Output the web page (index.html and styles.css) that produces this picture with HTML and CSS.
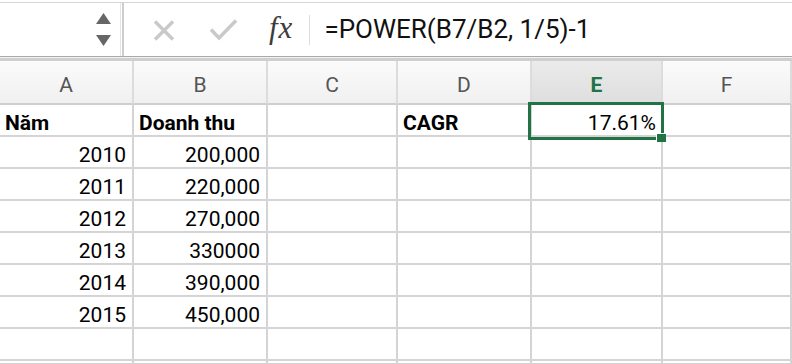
FILE: index.html
```html
<!DOCTYPE html>
<html lang="vi">

<head>
    <meta charset="UTF-8">
    <meta name="viewport" content="width=device-width, initial-scale=1.0">
    <title>CAGR</title>
    <link rel="stylesheet" href="styles.css">
</head>

<body>
    <div class="formula-bar">
        <div class="name-box">
            <div class="spinner">
                <svg width="15" height="12" viewBox="0 0 15 12"><polygon points="7.5,0 15,11 0,11" fill="#666"/></svg>
                <svg width="15" height="12" viewBox="0 0 15 12"><polygon points="0,0 15,0 7.5,11" fill="#666"/></svg>
            </div>
        </div>
        <div class="divider"></div>
        <div class="tools">
            <svg class="cancel" width="22" height="21" viewBox="0 0 22 21">
                <path d="M2 1.5 L20 19.5 M20 1.5 L2 19.5" stroke="#c9c9c9" stroke-width="3.4" fill="none"/>
            </svg>
            <svg class="enter" width="28" height="22" viewBox="0 0 28 22">
                <path d="M2 10.5 L10 19 L27 1.5" stroke="#c9c9c9" stroke-width="3.4" fill="none"/>
            </svg>
            <div class="fx">fx</div>
            <div class="fx-sep"></div>
        </div>
        <div class="formula">=POWER(B7/B2, 1/5)-1</div>
    </div>
    <div class="bar-edge"></div>

    <div class="sheet">
        <div class="head">A</div>
        <div class="head">B</div>
        <div class="head">C</div>
        <div class="head">D</div>
        <div class="head active">E</div>
        <div class="head">F</div>

        <div class="cell bold">Năm</div>
        <div class="cell bold">Doanh thu</div>
        <div class="cell"></div>
        <div class="cell bold">CAGR</div>
        <div class="cell num selected">17.61%
            <div class="selection"><span class="handle"></span></div>
        </div>
        <div class="cell"></div>

        <div class="cell num">2010</div>
        <div class="cell num">200,000</div>
        <div class="cell"></div>
        <div class="cell"></div>
        <div class="cell"></div>
        <div class="cell"></div>

        <div class="cell num">2011</div>
        <div class="cell num">220,000</div>
        <div class="cell"></div>
        <div class="cell"></div>
        <div class="cell"></div>
        <div class="cell"></div>

        <div class="cell num">2012</div>
        <div class="cell num">270,000</div>
        <div class="cell"></div>
        <div class="cell"></div>
        <div class="cell"></div>
        <div class="cell"></div>

        <div class="cell num">2013</div>
        <div class="cell num">330000</div>
        <div class="cell"></div>
        <div class="cell"></div>
        <div class="cell"></div>
        <div class="cell"></div>

        <div class="cell num">2014</div>
        <div class="cell num">390,000</div>
        <div class="cell"></div>
        <div class="cell"></div>
        <div class="cell"></div>
        <div class="cell"></div>

        <div class="cell num">2015</div>
        <div class="cell num">450,000</div>
        <div class="cell"></div>
        <div class="cell"></div>
        <div class="cell"></div>
        <div class="cell"></div>

        <div class="cell"></div>
        <div class="cell"></div>
        <div class="cell"></div>
        <div class="cell"></div>
        <div class="cell"></div>
        <div class="cell"></div>

        <div class="cell"></div>
        <div class="cell"></div>
        <div class="cell"></div>
        <div class="cell"></div>
        <div class="cell"></div>
        <div class="cell"></div>
    </div>
</body>

</html>
```

FILE: styles.css
```css
body {
    margin: 0;
    font-family: Roboto, 'Liberation Sans', sans-serif;
    background: #fff;
    overflow: hidden;
    height: 364px;
}

.formula-bar {
    display: flex;
    height: 53px;
    margin-top: 2px;
    border-top: 1px solid #d6d6d6;
    background: #fff;
}

.name-box {
    width: 120px;
    border-right: 1px solid #e4e4e4;
    display: flex;
    justify-content: flex-end;
}

.spinner {
    display: flex;
    flex-direction: column;
    gap: 10px;
    padding: 10px 9px 0 0;
}

.divider {
    width: 2px;
    margin-left: 1px;
    background: #cdcdcd;
}

.tools {
    display: flex;
    align-items: center;
    padding-left: 29px;
    height: 100%;
}

.cancel {
    margin-top: 1px;
}

.enter {
    margin-left: 34px;
    margin-top: 1px;
}

.fx {
    font-family: 'Liberation Serif', serif;
    font-style: italic;
    font-size: 31px;
    color: #3c3c3c;
    margin-left: 32px;
    margin-top: -4px;
    letter-spacing: 1px;
}

.fx-sep {
    width: 1px;
    height: 30px;
    background: #dedede;
    margin-left: 16px;
}

.formula {
    font-size: 26px;
    color: #111;
    padding: 11px 0 0 14px;
    line-height: 30px;
}

.bar-edge {
    height: 4px;
    border-top: 1px solid #a9a9a9;
    background: linear-gradient(#f2f2f2 0, #f2f2f2 1px, #cfcfcf 1px);
}

.sheet {
    display: grid;
    grid-template-columns: 134px 134px 130px 134px 131px 129px;
    grid-template-rows: 44px repeat(8, 32px) 4px;
}

.head {
    display: flex;
    align-items: center;
    justify-content: center;
    padding-top: 6px;
    box-sizing: border-box;
    font-size: 21px;
    color: #555;
    background: linear-gradient(#fbfbfb, #f0f0f0);
    border-right: 2px solid #dcdcdc;
    border-bottom: 2px solid #cfcfcf;
}

.head.active {
    background: linear-gradient(#ebebeb, #dedede);
    color: #217346;
    font-weight: bold;
}

.cell {
    position: relative;
    display: flex;
    align-items: flex-end;
    font-size: 21px;
    line-height: 22px;
    color: #000;
    padding: 0 5px 1px 5px;
    border-right: 2px solid #d4d4d4;
    border-bottom: 2px solid #d4d4d4;
    white-space: nowrap;
}

.bold {
    font-weight: bold;
}

.num {
    justify-content: flex-end;
    padding-right: 6px;
}

.selected {
    padding-right: 5px;
}

.selection {
    position: absolute;
    z-index: 2;
    left: -4px;
    top: -3px;
    width: 136px;
    height: 38px;
    box-sizing: border-box;
    border: 3px solid #217346;
}

.handle {
    position: absolute;
    right: -5px;
    bottom: -5px;
    width: 9px;
    height: 8px;
    background: #217346;
    border-top: 1px solid #fff;
    border-left: 1px solid #fff;
}
```
